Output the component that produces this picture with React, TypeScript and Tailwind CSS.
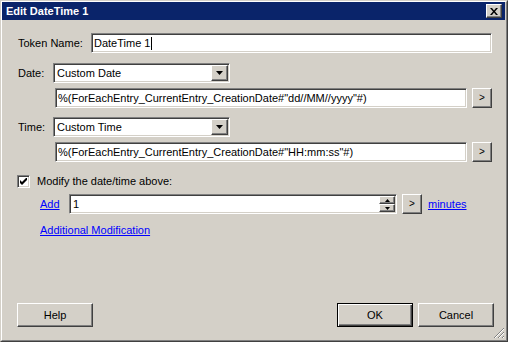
import React from "react";

const sunken =
  "border border-t-[#808080] border-l-[#808080] border-r-white border-b-white shadow-[inset_1px_1px_0_#404040,inset_-1px_-1px_0_#d4d0c8]";
const raised =
  "border border-t-white border-l-white border-r-[#404040] border-b-[#404040] shadow-[inset_-1px_-1px_0_#808080]";

function ArrowBtn() {
  return (
    <div className={`w-[17px] h-full bg-[#d4d0c8] ${raised} flex items-center justify-center`}>
      <svg width="7" height="4" viewBox="0 0 7 4">
        <path d="M0 0h7L3.5 4z" fill="#000" />
      </svg>
    </div>
  );
}

function Select({ text }: { text: string }) {
  return (
    <div className={`w-[177px] h-[20px] bg-white ${sunken} p-px flex items-stretch`}>
      <div className="flex-1 flex items-center pl-[2px]">{text}</div>
      <ArrowBtn />
    </div>
  );
}

function SmallBtn() {
  return (
    <button className={`w-[20px] h-[20px] bg-[#d4d0c8] ${raised} flex items-center justify-center text-[10px] leading-none pb-px`}>
      &gt;
    </button>
  );
}

function FormatRow({ text, mt }: { text: string; mt: string }) {
  return (
    <div className={`flex ml-[53px] ${mt} gap-[5px]`}>
      <div className={`w-[412px] h-[20px] bg-white ${sunken} flex items-center pl-[2px] whitespace-nowrap overflow-hidden`}>
        {text}
      </div>
      <SmallBtn />
    </div>
  );
}

function DlgButton({ label, def }: { label: string; def?: boolean }) {
  return (
    <button
      className={
        def
          ? "w-[76px] h-[24px] bg-[#d4d0c8] border border-black shadow-[inset_1px_1px_0_white,inset_-1px_-1px_0_#404040,inset_-2px_-2px_0_#808080] flex items-center justify-center"
          : `w-[76px] h-[24px] bg-[#d4d0c8] ${raised} flex items-center justify-center`
      }
    >
      {label}
    </button>
  );
}

export default function App() {
  return (
    <div
      className="w-[508px] h-[342px] bg-[#d4d0c8] border border-t-[#d4d0c8] border-l-[#d4d0c8] border-r-[#404040] border-b-[#404040] text-[11px] text-black"
      style={{ fontFamily: '"Liberation Sans", Arial, sans-serif' }}
    >
      <div className="w-full h-full border border-t-white border-l-white border-r-[#808080] border-b-[#808080] flex flex-col relative">
        {/* Title bar */}
        <div className="h-[18px] bg-[#0a246a] flex items-center justify-between pl-[4px] pr-[3px] mr-px">
          <span className="text-white font-bold text-[11px]">Edit DateTime 1</span>
          <div className={`w-[16px] h-[14px] bg-[#d4d0c8] ${raised} flex items-center justify-center`}>
            <svg width="8" height="7" viewBox="0 0 8 7">
              <path d="M0 0h2l2 2.5L6 0h2L5 3.5 8 7H6L4 4.5 2 7H0l3-3.5z" fill="#000" />
            </svg>
          </div>
        </div>

        {/* Token name */}
        <div className="flex items-center ml-[16px] mt-[13px]">
          <span className="w-[73px]">Token Name:</span>
          <div className={`w-[401px] h-[20px] bg-white ${sunken} flex items-center pl-[2px]`}>
            <span>DateTime 1</span>
            <span className="inline-block w-px h-[13px] bg-black ml-px" />
          </div>
        </div>

        {/* Date */}
        <div className="flex items-center ml-[16px] mt-[10px]">
          <span className="w-[35px]">Date:</span>
          <Select text="Custom Date" />
        </div>
        <FormatRow mt="mt-[5px]" text={'%(ForEachEntry_CurrentEntry_CreationDate#"dd//MM//yyyy"#)'} />

        {/* Time */}
        <div className="flex items-center ml-[16px] mt-[9px]">
          <span className="w-[35px]">Time:</span>
          <Select text="Custom Time" />
        </div>
        <FormatRow mt="mt-[5px]" text={'%(ForEachEntry_CurrentEntry_CreationDate#"HH:mm:ss"#)'} />

        {/* Checkbox */}
        <div className="flex items-center ml-[15px] mt-[13px] h-[13px] gap-[7px]">
          <div className={`w-[13px] h-[13px] bg-white ${sunken} flex items-center justify-center`}>
            <svg width="7" height="7" viewBox="0 0 7 7">
              <path d="M0 2v3l2 2 5-5V-1L2 4z" fill="#000" />
            </svg>
          </div>
          <span>Modify the date/time above:</span>
        </div>

        {/* Add row */}
        <div className="flex items-center ml-[38px] mt-[6px] h-[20px]">
          <a className="w-[29px] text-[#0000ff] underline cursor-pointer">Add</a>
          <div className={`w-[328px] h-[20px] bg-white ${sunken} flex items-stretch p-px`}>
            <div className="flex-1 flex items-center pl-[2px]">1</div>
            <div className="w-[16px] flex flex-col">
              <div className={`flex-1 bg-[#d4d0c8] ${raised} flex items-center justify-center`}>
                <svg width="5" height="3" viewBox="0 0 5 3">
                  <path d="M2.5 0L5 3H0z" fill="#000" />
                </svg>
              </div>
              <div className={`flex-1 bg-[#d4d0c8] ${raised} flex items-center justify-center`}>
                <svg width="5" height="3" viewBox="0 0 5 3">
                  <path d="M0 0h5L2.5 3z" fill="#000" />
                </svg>
              </div>
            </div>
          </div>
          <div className="ml-[5px]">
            <SmallBtn />
          </div>
          <a className="ml-[6px] text-[#0000ff] underline cursor-pointer">minutes</a>
        </div>

        {/* Additional modification */}
        <div className="ml-[38px] mt-[9px] h-[14px] flex items-center">
          <a className="text-[#0000ff] underline cursor-pointer">Additional Modification</a>
        </div>

        {/* Buttons */}
        <div className="mt-auto mb-[13px] flex items-center ml-[15px] mr-[12px]">
          <DlgButton label="Help" />
          <div className="flex-1" />
          <DlgButton label="OK" def />
          <div className="w-[5px]" />
          <DlgButton label="Cancel" />
        </div>

        {/* Resize grip */}
        <svg className="absolute right-[1px] bottom-[1px]" width="12" height="12" viewBox="0 0 12 12">
          <path d="M11 1L1 11M11 5L5 11M11 9L9 11" stroke="#808080" strokeWidth="1" />
          <path d="M11 2L2 11M11 6L6 11M11 10L10 11" stroke="#ffffff" strokeWidth="1" />
        </svg>
      </div>
    </div>
  );
}
